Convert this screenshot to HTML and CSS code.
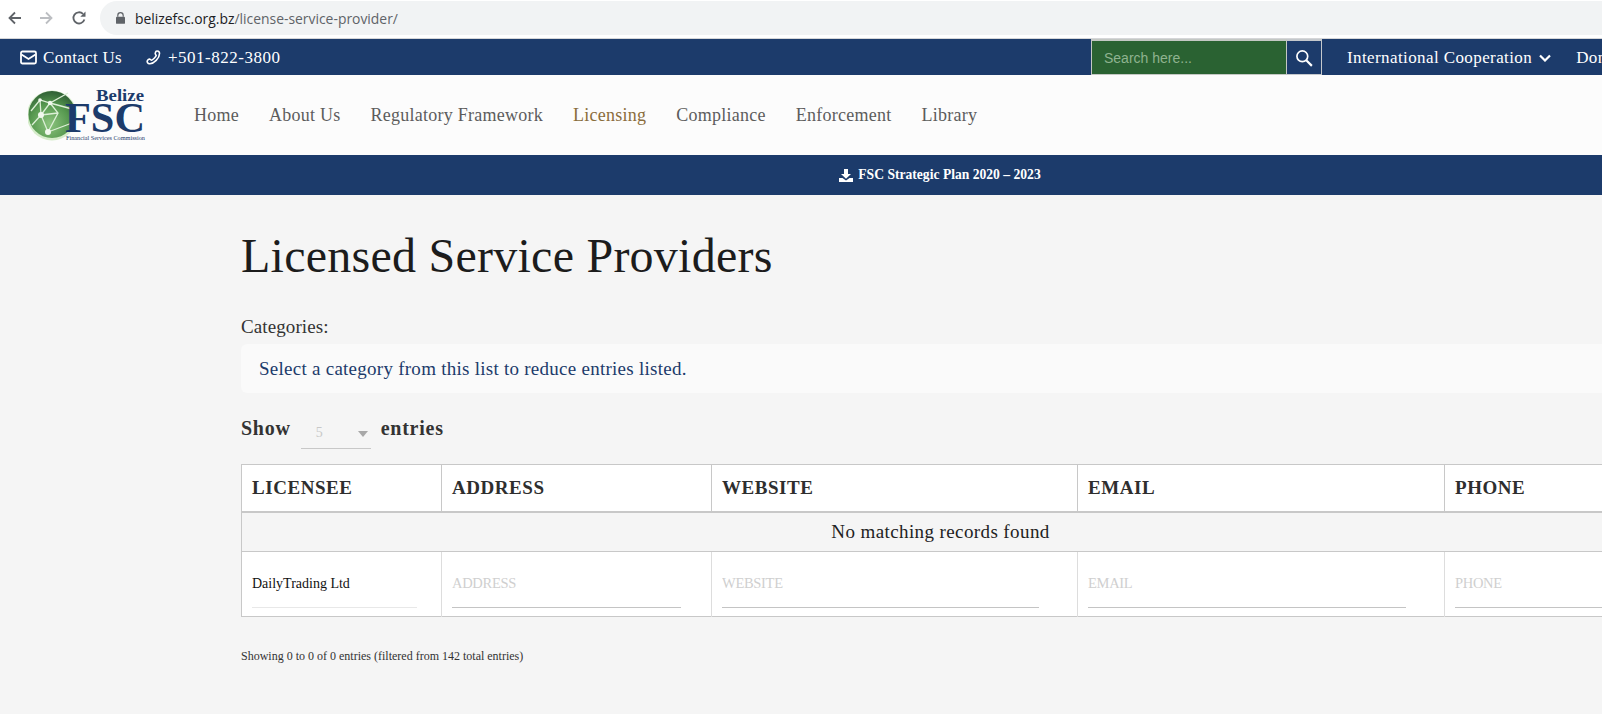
FILE: index.html
```html
<!DOCTYPE html>
<html lang="en">
<head>
  <meta charset="UTF-8">
  <title>Licensed Service Providers - Belize FSC</title>
  <link rel="stylesheet" href="styles.css">
</head>
<body>
  <div class="browser-bar">
    <svg class="nav-icon" viewBox="0 0 16 16"><path d="M14 8H3M8 2.500 2.500 8 8 13.500" fill="none" stroke="#5f6368" stroke-width="1.800"/></svg>
    <svg class="nav-icon" viewBox="0 0 16 16"><path d="M2 8h11M8 2.500 13.500 8 8 13.500" fill="none" stroke="#bcbec2" stroke-width="1.800"/></svg>
    <svg class="nav-icon" viewBox="0 0 16 16"><path d="M13.400 9.500A5.600 5.600 0 1 1 12 3.900" fill="none" stroke="#5f6368" stroke-width="1.800"/><path d="M14.500 1.500v5.200H9.300z" fill="#5f6368"/></svg>
    <div class="omnibox">
      <svg class="lock" viewBox="0 0 10 13"><path d="M2 5V3.600a3 3 0 0 1 6 0V5" fill="none" stroke="#5f6368" stroke-width="1.300"/><rect y="5" width="10" height="8" rx="1" fill="#5f6368"/></svg>
      <span class="host">belizefsc.org.bz</span><span class="path">/license-service-provider/</span>
    </div>
  </div>

  <div class="top-bar">
    <div class="top-left">
      <a class="top-link">
        <svg class="top-icon" viewBox="0 0 17 14"><rect x="1" y="1" width="15" height="12" rx="1.500" fill="none" stroke="#fff" stroke-width="1.800"/><path d="M1.500 4 8.500 8.500 15.500 4" fill="none" stroke="#fff" stroke-width="1.800"/></svg>
        Contact Us
      </a>
      <a class="top-link top-phone">
        <svg class="top-icon" viewBox="0 0 16 16"><path d="M11 1.200c1.300-.6 3.200.4 3.400 1.900.2 2.800-1.500 6-3.500 8s-4.800 3.800-7.300 3.500c-1.500-.1-2.800-1.600-2.200-3.100.3-.6 1.500-1.700 2.200-1.900.8-.2 1.700 1.300 2.300 1.400 1.300-.2 4.700-3.900 5-5.100 0-.6-1.200-1.300-1.100-2.100.1-.7.900-2.300 1.200-2.600z" fill="none" stroke="#fff" stroke-width="1.700"/></svg>
        +501-822-3800
      </a>
    </div>
    <div class="search-box">
      <input class="search-input" type="text" placeholder="Search here...">
      <button class="search-btn" type="button">
        <svg viewBox="0 0 16 16" width="18" height="18"><circle cx="6.500" cy="6.500" r="4.800" fill="none" stroke="#fff" stroke-width="1.500"/><path d="m10 10 5 5" stroke="#fff" stroke-width="1.900"/></svg>
      </button>
    </div>
    <div class="top-right">
      <a class="top-link">International Cooperation
        <svg class="chevron" viewBox="0 0 12 8"><path d="M1 1.500 6 6.500 11 1.500" fill="none" stroke="#fff" stroke-width="2.200"/></svg>
      </a>
      <a class="top-link">Donate</a>
    </div>
  </div>

  <header class="main-nav">
    <svg class="logo" viewBox="0 0 120 56" width="120" height="56">
      <defs>
        <radialGradient id="globe" cx="45%" cy="70%" r="70%">
          <stop offset="0" stop-color="#8cc47e"/>
          <stop offset="0.6" stop-color="#56984f"/>
          <stop offset="1" stop-color="#2f5f35"/>
        </radialGradient>
      </defs>
      <circle cx="24" cy="28.500" r="25" fill="#d5ecca"/>
      <circle cx="24" cy="27.500" r="23.500" fill="url(#globe)"/>
      <path d="M13 28 12 13 22 16 40 6M13 28 20 45 44 36M22 16 44 22M12 13 3 24M13 28 4 38M20 45 30 26 22 16M13 28 30 26M22 16 13 28" fill="none" stroke="#dcefd6" stroke-width="1.300"/>
      <circle cx="13" cy="28" r="3" fill="#f1f8ee"/>
      <circle cx="20" cy="45" r="3" fill="#f1f8ee"/>
      <circle cx="22" cy="16" r="2.200" fill="#f1f8ee"/>
      <circle cx="12" cy="13" r="1.800" fill="#f1f8ee"/>
      <text class="logo-belize" x="68" y="14" textLength="48" lengthAdjust="spacingAndGlyphs">Belize</text>
      <text class="logo-fsc" x="37" y="45" textLength="80" lengthAdjust="spacingAndGlyphs">FSC</text>
      <text class="logo-sub" x="38" y="53" textLength="79" lengthAdjust="spacingAndGlyphs">Financial Services Commission</text>
    </svg>
    <nav class="nav-links">
      <a>Home</a>
      <a>About Us</a>
      <a>Regulatory Framework</a>
      <a class="active">Licensing</a>
      <a>Compliance</a>
      <a>Enforcement</a>
      <a>Library</a>
    </nav>
  </header>

  <div class="notice-bar">
    <svg class="notice-icon" viewBox="0 0 14 13"><path d="M5 0h4v5h3L7 9.800 2 5h3z" fill="#fff"/><path d="M0 9h3.500L7 11.500 10.500 9H14v4H0z" fill="#fff"/></svg>
    FSC Strategic Plan 2020 – 2023
  </div>

  <main class="content">
    <h1 class="page-title">Licensed Service Providers</h1>
    <div class="cat-label">Categories:</div>
    <div class="cat-select">Select a category from this list to reduce entries listed.</div>

    <div class="length-row">
      <span>Show</span>
      <div class="length-select"><span class="length-value">5</span><i class="caret"></i></div>
      <span>entries</span>
    </div>

    <table class="providers">
      <colgroup>
        <col class="col-licensee">
        <col class="col-address">
        <col class="col-website">
        <col class="col-email">
        <col class="col-phone">
      </colgroup>
      <thead>
        <tr>
          <th>LICENSEE</th>
          <th>ADDRESS</th>
          <th>WEBSITE</th>
          <th>EMAIL</th>
          <th>PHONE</th>
        </tr>
      </thead>
      <tbody>
        <tr class="empty-row">
          <td colspan="5"><span class="empty-text">No matching records found</span></td>
        </tr>
      </tbody>
      <tfoot>
        <tr>
          <td><input class="filter filter-first" type="text" value="DailyTrading Ltd"></td>
          <td><input class="filter" type="text" placeholder="ADDRESS"></td>
          <td><input class="filter" type="text" placeholder="WEBSITE"></td>
          <td><input class="filter" type="text" placeholder="EMAIL"></td>
          <td><input class="filter" type="text" placeholder="PHONE"></td>
        </tr>
      </tfoot>
    </table>

    <p class="table-info">Showing 0 to 0 of 0 entries (filtered from 142 total entries)</p>
  </main>
</body>
</html>
```

FILE: styles.css
```css
html, body {
  margin: 0;
  padding: 0;
  overflow: hidden;
}

body {
  width: 1602px;
  height: 714px;
  background: #f5f5f5;
  font-family: "Liberation Serif", serif;
  color: #222;
}

a {
  color: inherit;
  text-decoration: none;
}

/* browser chrome */
.browser-bar {
  height: 38px;
  background: #fff;
  border-bottom: 1px solid #d5d6d8;
  display: flex;
  align-items: flex-start;
  padding-left: 7px;
  gap: 15px;
}

.nav-icon {
  width: 16px;
  height: 16px;
  flex: none;
  margin-top: 10px;
}

.nav-icon:nth-child(3) {
  margin-left: 2px;
}

.omnibox {
  flex: 1;
  height: 34px;
  margin: 1px 0 0 -2px;
  padding-left: 16px;
  background: #f1f3f4;
  border-radius: 17px 0 0 17px;
  display: flex;
  align-items: center;
  font-family: "Open Sans", sans-serif;
  font-size: 13.9px;
}

.lock {
  width: 9px;
  height: 12px;
  margin-right: 10px;
}

.host {
  color: #202124;
}

.path {
  color: #5f6368;
}

/* top bar */
.top-bar {
  height: 36px;
  background: #1c3b6b;
  color: #fff;
  display: flex;
  align-items: stretch;
  font-size: 17px;
  letter-spacing: 0.3px;
  white-space: nowrap;
}

.top-left {
  width: 1091px;
  flex: none;
  padding: 1px 0 0 20px;
  box-sizing: border-box;
  display: flex;
  align-items: center;
  gap: 23px;
}

.top-link {
  display: flex;
  align-items: center;
  flex: none;
}

.top-phone {
  letter-spacing: 0.5px;
}

.top-icon {
  width: 17px;
  height: 15px;
  margin-right: 6px;
}

.search-box {
  display: flex;
  flex: none;
}

.search-input {
  width: 196px;
  height: 36px;
  box-sizing: border-box;
  background: #2a6232;
  border: 1px solid #c4c8c4;
  border-top-width: 2px;
  padding: 0 12px;
  font-family: "Liberation Sans", sans-serif;
  font-size: 14px;
  color: #fff;
}

.search-input::placeholder {
  color: #8fb38f;
  opacity: 1;
}

.search-btn {
  width: 35px;
  height: 36px;
  padding: 0;
  background: #1c3b6b;
  border: 1px solid #c4c8cc;
  border-left: none;
  border-top-width: 2px;
  display: flex;
  align-items: center;
  justify-content: center;
}

.top-right {
  display: flex;
  flex: none;
  align-items: center;
  gap: 25px;
  padding: 1px 0 0 25px;
  letter-spacing: 0.4px;
}

.chevron {
  width: 12px;
  height: 8px;
  margin-left: 7px;
}

/* main nav */
.main-nav {
  height: 80px;
  background: #fcfcfc;
  display: flex;
  align-items: center;
  padding-left: 28px;
}

.logo {
  flex: none;
}

.logo-belize {
  font: bold 17px "Liberation Serif", serif;
  fill: #1c3b6b;
}

.logo-fsc {
  font: bold 42px "Liberation Serif", serif;
  fill: #1c3b6b;
}

.logo-sub {
  font: 6px "Liberation Serif", serif;
  fill: #1c3b6b;
}

.nav-links {
  display: flex;
  gap: 30px;
  margin-left: 46px;
  font-size: 18px;
  letter-spacing: 0.25px;
  color: #5c5c5c;
}

.nav-links .active {
  color: #8a6d3b;
}

.notice-bar {
  height: 40px;
  background: #1c3b6b;
  color: #fff;
  display: flex;
  align-items: center;
  justify-content: center;
  padding-left: 278px;
  font-size: 13.6px;
  font-weight: bold;
}

.notice-icon {
  width: 14px;
  height: 13px;
  margin-right: 5px;
}

/* content */
.content {
  width: 1800px;
  padding-left: 241px;
  box-sizing: border-box;
}

.page-title {
  margin: 33px 0 0;
  font-size: 48px;
  line-height: 56px;
  font-weight: normal;
  letter-spacing: 0.25px;
  color: #1c1c1c;
}

.cat-label {
  margin-top: 33px;
  font-size: 19px;
  line-height: 20px;
  letter-spacing: 0.1px;
  color: #333;
}

.cat-select {
  margin-top: 7px;
  height: 49px;
  padding-left: 18px;
  background: #fafafa;
  border-radius: 6px;
  display: flex;
  align-items: center;
  font-size: 19px;
  letter-spacing: 0.26px;
  color: #1c3b6b;
}

.length-row {
  margin-top: 24px;
  height: 36px;
  display: flex;
  gap: 10px;
  font-size: 20px;
  font-weight: bold;
  color: #333;
  letter-spacing: 0.75px;
}

.length-select {
  width: 52px;
  height: 31px;
  border-bottom: 1px solid #c8c8c8;
  display: flex;
  align-items: center;
  justify-content: space-between;
  padding: 0 3px 0 15px;
}

.length-value {
  font-size: 14px;
  font-weight: normal;
  color: #c8c8c8;
}

.caret {
  width: 0;
  height: 0;
  border-left: 5px solid transparent;
  border-right: 5px solid transparent;
  border-top: 6px solid #a8a8a8;
  margin-top: 2px;
}

.providers {
  margin-top: 11px;
  width: 1398px;
  table-layout: fixed;
  border-collapse: collapse;
  border: 1px solid #c8c8c8;
}

.col-licensee { width: 200px; }
.col-address { width: 270px; }
.col-website { width: 366px; }
.col-email { width: 367px; }
.col-phone { width: 195px; }

.providers th {
  height: 46px;
  padding: 0 10px;
  background: #fff;
  border-right: 1px solid #c8c8c8;
  border-bottom: 2px solid #c8c8c8;
  text-align: left;
  font-size: 19px;
  letter-spacing: 0.55px;
  color: #2e2e2e;
}

.empty-row td {
  height: 38px;
  padding: 0;
  text-align: center;
  border-bottom: 1px solid #c8c8c8;
  font-size: 19px;
  letter-spacing: 0.4px;
  color: #222;
}

.providers tfoot td {
  height: 64px;
  padding: 0 10px 8px;
  box-sizing: border-box;
  background: #fff;
  border-right: 1px solid #ddd;
}

.filter {
  display: block;
  width: 92%;
  height: 48px;
  box-sizing: border-box;
  margin-top: 8px;
  padding: 0;
  background: transparent;
  border: none;
  border-bottom: 1px solid #c4c4c4;
  font-family: "Liberation Serif", serif;
  font-size: 14.5px;
  letter-spacing: -0.3px;
  color: #111;
}

.filter-first {
  font-size: 14px;
  letter-spacing: 0;
  border-bottom-color: #e8e8e8;
}

.filter::placeholder {
  color: #cfcfcf;
  opacity: 1;
}

.table-info {
  margin: 32px 0 0;
  font-size: 12px;
  line-height: 14px;
  color: #333;
}
```
